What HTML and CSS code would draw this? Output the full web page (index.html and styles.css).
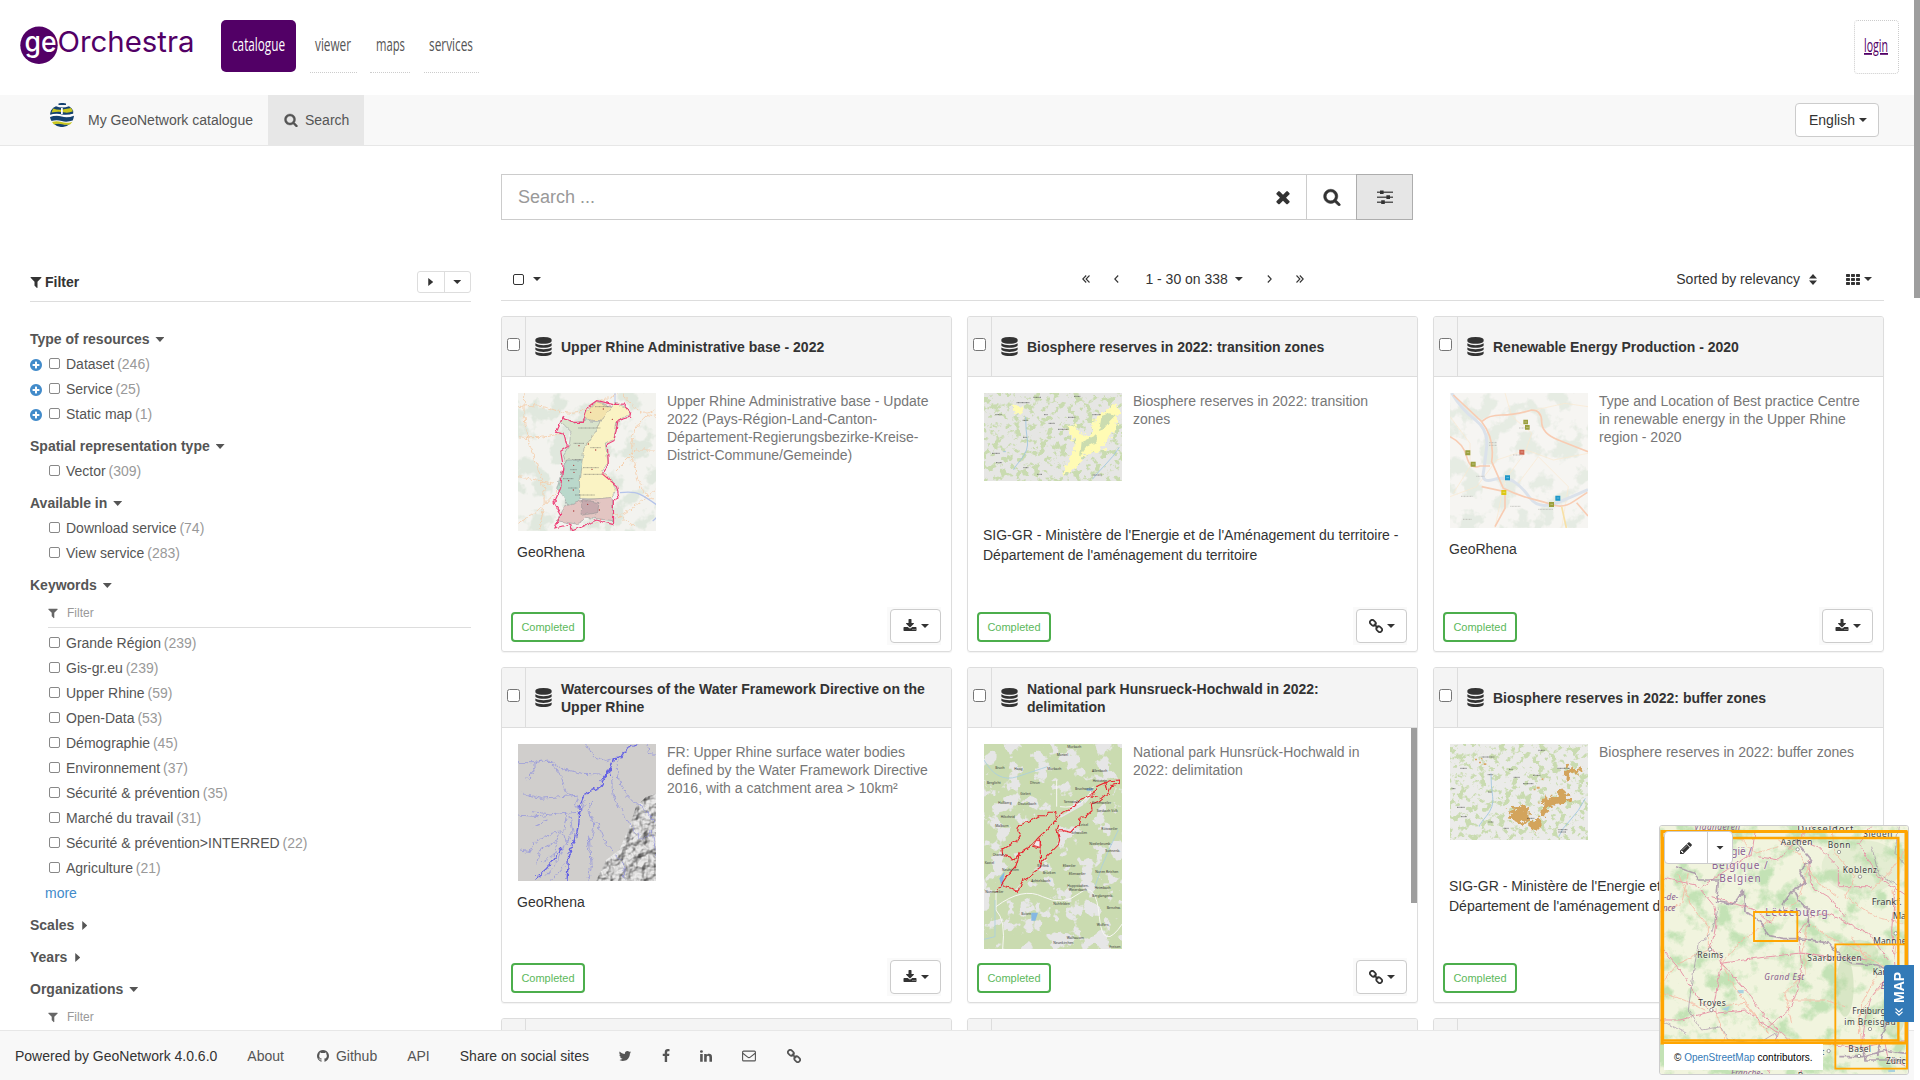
FILE: index.html
```html
<!DOCTYPE html>
<html lang="en">
<head>
<meta charset="utf-8">
<title>My GeoNetwork catalogue</title>
<link rel="stylesheet" href="styles.css">
</head>
<body>
<svg class="defs" aria-hidden="true">
  <symbol id="i-search" viewBox="0 0 1792 1792"><path stroke="currentColor" stroke-width="50" d="M1216 832q0-185-131.5-316.5t-316.5-131.5-316.5 131.5-131.5 316.5 131.5 316.5 316.5 131.5 316.5-131.5 131.5-316.5zm512 832q0 52-38 90t-90 38q-54 0-90-38l-343-342q-179 124-399 124-143 0-273.5-55.5t-225-150-150-225-55.5-273.5 55.5-273.5 150-225 225-150 273.5-55.5 273.5 55.5 225 150 150 225 55.5 273.5q0 220-124 399l343 343q37 37 37 90z"/></symbol>
  <symbol id="i-times" viewBox="0 0 1792 1792"><path d="M1490 1322q0 40-28 68l-136 136q-28 28-68 28t-68-28l-294-294-294 294q-28 28-68 28t-68-28l-136-136q-28-28-28-68t28-68l294-294-294-294q-28-28-28-68t28-68l136-136q28-28 68-28t68 28l294 294 294-294q28-28 68-28t68 28l136 136q28 28 28 68t-28 68l-294 294 294 294q28 28 28 68z"/></symbol>
  <symbol id="i-filter" viewBox="0 0 1792 1792"><path d="M1595 295q17 41-14 70l-493 493v742q0 42-39 59-13 5-25 5-27 0-45-19l-256-256q-19-19-19-45v-486l-493-493q-31-29-14-70 17-39 59-39h1280q42 0 59 39z"/></symbol>
  <symbol id="i-download" viewBox="0 0 1792 1792"><path d="M1344 1344q0-26-19-45t-45-19-45 19-19 45 19 45 45 19 45-19 19-45zm256 0q0-26-19-45t-45-19-45 19-19 45 19 45 45 19 45-19 19-45zm128-224v320q0 40-28 68t-68 28h-1472q-40 0-68-28t-28-68v-320q0-40 28-68t68-28h465l135 136q58 56 136 56t136-56l136-136h464q40 0 68 28t28 68zm-325-569q17 41-14 70l-448 448q-18 19-45 19t-45-19l-448-448q-31-29-14-70 17-39 59-39h256v-448q0-26 19-45t45-19h256q26 0 45 19t19 45v448h256q42 0 59 39z"/></symbol>
  <symbol id="i-plus" viewBox="0 0 1792 1792"><path d="M1344 960v-128q0-26-19-45t-45-19h-256v-256q0-26-19-45t-45-19h-128q-26 0-45 19t-19 45v256h-256q-26 0-45 19t-19 45v128q0 26 19 45t45 19h256v256q0 26 19 45t45 19h128q26 0 45-19t19-45v-256h256q26 0 45-19t19-45zm320-64q0 209-103 385.5t-279.5 279.5-385.5 103-385.5-103-279.5-279.5-103-385.5 103-385.5 279.5-279.5 385.5-103 385.5 103 279.5 279.5 103 385.5z"/></symbol>
  <symbol id="i-github" viewBox="0 0 1792 1792"><path d="M896 128q209 0 385.5 103t279.5 279.5 103 385.5q0 251-146.5 451.5t-378.5 277.5q-27 5-40-7t-13-30q0-3 .5-76.5t.5-134.5q0-97-52-142 57-6 102.5-18t94-39 81-66.5 53-105 20.5-150.5q0-119-79-206 37-91-8-204-28-9-81 11t-92 44l-38 24q-93-26-192-26t-192 26q-16-11-42.5-27t-83.5-38.5-85-13.5q-45 113-8 204-79 87-79 206 0 85 20.5 150t52.5 105 80.5 67 94 39 102.5 18q-39 36-49 103-21 10-45 15t-57 5-65.5-21.5-55.5-62.5q-19-32-48.5-52t-49.5-24l-20-3q-21 0-29 4.5t-5 11.5 9 14 13 12l7 5q22 10 43.5 38t31.5 51l10 23q13 38 44 61.5t67 30 69.5 7 55.5-3.5l23-4q0 38 .5 88.5t.5 54.5q0 18-13 30t-40 7q-232-77-378.5-277.5t-146.5-451.5q0-209 103-385.5t279.5-279.5 385.5-103z"/></symbol>
  <symbol id="i-twitter" viewBox="0 0 1792 1792"><path d="M1684 408q-67 98-162 167 1 14 1 42 0 130-38 259.5t-115.5 248.5-184.5 210.5-258 146-323 54.500q-271 0-496-145 35 4 78 4 225 0 401-138-105-2-188-64.500t-114-159.500q33 5 61 5 43 0 85-11-112-23-185.500-111.500t-73.500-205.500v-4q68 38 146 41-66-44-105-115t-39-154q0-88 44-163 121 149 294.500 238.500t371.500 99.500q-8-38-8-74 0-134 94.500-228.500t228.500-94.500q140 0 236 102 109-21 205-78-37 115-142 178 93-10 186-50z"/></symbol>
  <symbol id="i-facebook" viewBox="0 0 1792 1792"><path d="M1343 12v264h-157q-86 0-116 36t-30 108v189h293l-39 296h-254v759h-306v-759h-255v-296h255v-218q0-186 104-288.5t277-102.5q147 0 228 12z"/></symbol>
  <symbol id="i-linkedin" viewBox="0 0 1792 1792"><path d="M477 625v991h-330v-991h330zm21-306q1 73-50.5 122t-135.5 49h-2q-82 0-132-49t-50-122q0-74 51.5-122.5t134.5-48.5 133 48.5 51 122.5zm1166 729v568h-329v-530q0-105-40.5-164.5t-126.5-59.5q-63 0-105.5 34.5t-63.5 85.5q-11 30-11 81v553h-329q2-399 2-647t-1-296l-1-48h329v144h-2q20-32 41-56t56.5-52 87-43.5 114.5-15.5q171 0 275 113.5t104 332.5z"/></symbol>
  <symbol id="i-database" viewBox="0 0 1792 1792"><path d="M896 768q237 0 443-43t325-127v170q0 69-103 128t-280 93.5-385 34.5-385-34.5-280-93.5-103-128v-170q119 84 325 127t443 43zm0 768q237 0 443-43t325-127v170q0 69-103 128t-280 93.5-385 34.5-385-34.5-280-93.5-103-128v-170q119 84 325 127t443 43zm0-384q237 0 443-43t325-127v170q0 69-103 128t-280 93.5-385 34.5-385-34.5-280-93.5-103-128v-170q119 84 325 127t443 43zm0-1152q208 0 385 34.5t280 93.5 103 128v128q0 69-103 128t-280 93.5-385 34.5-385-34.5-280-93.5-103-128v-128q0-69 103-128t280-93.5 385-34.5z"/></symbol>
  <symbol id="i-pencil" viewBox="0 0 1792 1792"><path d="M491 1536l91-91-235-235-91 91v107h128v128h107zm523-928q0-22-22-22-10 0-17 7l-542 542q-7 7-7 17 0 22 22 22 10 0 17-7l542-542q7-7 7-17zm-54-192l416 416-832 832h-416v-416zm683 96q0 53-37 90l-166 166-416-416 166-165q36-38 90-38 53 0 91 38l235 234q37 39 37 91z"/></symbol>
  <symbol id="i-link" viewBox="0 0 14 14"><g fill="none" stroke="currentColor" stroke-width="1.7" transform="rotate(45 7 7)"><rect x="-.6" y="4.7" width="6.4" height="4.6" rx="2.3"/><rect x="8.2" y="4.7" width="6.4" height="4.6" rx="2.3"/><path d="M4 7h6"/></g></symbol>
  <symbol id="i-mail" viewBox="0 0 14 12"><g fill="none" stroke="currentColor" stroke-width="1.1"><rect x=".6" y="1.1" width="12.8" height="9.8" rx="1"/><path d="M.8 3.2l4.9 3.9q1.3 1 2.6 0l4.9-3.9"/></g></symbol>
  <symbol id="i-sliders" viewBox="0 0 16 14"><path opacity=".8" d="M0 1.6h16v1.4H0zM0 6.5h16v1.4H0zM0 11.5h16v1.4H0z"/><path d="M3 .4h3.6v3.7H3zM9.4 5.3H13V9H9.400zM4.200 10.300h3.600V14H4.200z"/></symbol>
  <symbol id="i-th" viewBox="0 0 14 11"><path d="M0 .7Q0 0 .7 0H3.300Q4 0 4 .7V2.300Q4 3 3.300 3H.7Q0 3 0 2.300zM5 .7Q5 0 5.700 0H8.300Q9 0 9 .7V2.300Q9 3 8.300 3H5.700Q5 3 5 2.300zM10 .7Q10 0 10.700 0h2.600q.7 0 .7.7v1.600q0 .7-.7.7h-2.600q-.7 0-.7-.7z"/><path transform="translate(0 4)" d="M0 .7Q0 0 .7 0H3.300Q4 0 4 .7V2.300Q4 3 3.300 3H.7Q0 3 0 2.300zM5 .7Q5 0 5.700 0H8.300Q9 0 9 .7V2.300Q9 3 8.300 3H5.700Q5 3 5 2.300zM10 .7Q10 0 10.700 0h2.600q.7 0 .7.7v1.600q0 .7-.7.7h-2.600q-.7 0-.7-.7z"/><path transform="translate(0 8)" d="M0 .7Q0 0 .7 0H3.300Q4 0 4 .7V2.300Q4 3 3.300 3H.7Q0 3 0 2.300zM5 .7Q5 0 5.700 0H8.300Q9 0 9 .7V2.300Q9 3 8.300 3H5.700Q5 3 5 2.300zM10 .7Q10 0 10.700 0h2.600q.7 0 .7.7v1.600q0 .7-.7.7h-2.600q-.7 0-.7-.7z"/></symbol>
  <symbol id="i-sort" viewBox="0 0 8 11"><path d="M4 0l4 4.500H0zM0 6.500h8L4 11z"/></symbol>
  <symbol id="i-dleft" viewBox="0 0 8 8"><path fill="none" stroke="currentColor" stroke-width="1.100" d="M4.200.5L.8 4l3.400 3.500M7.500.5L4.100 4l3.400 3.500"/></symbol>
  <symbol id="i-left" viewBox="0 0 5 8"><path fill="none" stroke="currentColor" stroke-width="1.100" d="M4.200.5L.8 4l3.400 3.500"/></symbol>

  <filter id="green" x="0" y="0" width="1" height="1" color-interpolation-filters="sRGB"><feTurbulence type="fractalNoise" baseFrequency=".05" numOctaves="4" seed="7"/><feColorMatrix values="0 0 0 0 .79  0 0 0 0 .86  0 0 0 0 .69  10 0 0 0 -5.3"/></filter>
  <filter id="grey" x="0" y="0" width="1" height="1" color-interpolation-filters="sRGB"><feTurbulence type="fractalNoise" baseFrequency=".022" numOctaves="4" seed="12"/><feColorMatrix values="0 0 0 0 .9  0 0 0 0 .9  0 0 0 0 .9  18 0 0 0 -9.8"/></filter>
  <filter id="woods" x="0" y="0" width="1" height="1" color-interpolation-filters="sRGB"><feTurbulence type="fractalNoise" baseFrequency=".016" numOctaves="5" seed="5"/><feColorMatrix values="0 0 0 0 .72  0 0 0 0 .87  0 0 0 0 .67  5 0 0 0 -2.5"/></filter>
  <filter id="pale" x="0" y="0" width="1" height="1" color-interpolation-filters="sRGB"><feTurbulence type="fractalNoise" baseFrequency=".018" numOctaves="4" seed="9"/><feColorMatrix values="0 0 0 0 .88  0 0 0 0 .91  0 0 0 0 .87  8 0 0 0 -4"/></filter>
  <filter id="relief" x="0" y="0" width="1" height="1" color-interpolation-filters="sRGB"><feTurbulence type="fractalNoise" baseFrequency=".04" numOctaves="3" seed="4"/><feDiffuseLighting surfaceScale="14" diffuseConstant="1.15" lighting-color="#d8d8d8" result="l"><feDistantLight azimuth="225" elevation="60"/></feDiffuseLighting><feComposite in="l" in2="SourceGraphic" operator="in"/></filter>
  <filter id="rough" x="-.1" y="-.1" width="1.2" height="1.2"><feTurbulence type="fractalNoise" baseFrequency=".07" numOctaves="3" seed="2" result="n"/><feDisplacementMap in="SourceGraphic" in2="n" scale="18" xChannelSelector="R" yChannelSelector="G"/></filter>
  <filter id="edge" x="-.1" y="-.1" width="1.2" height="1.2" color-interpolation-filters="sRGB"><feTurbulence type="fractalNoise" baseFrequency=".06" numOctaves="2" seed="2" result="n"/><feDisplacementMap in="SourceGraphic" in2="n" scale="12" xChannelSelector="R" yChannelSelector="G"/></filter>
  <filter id="ragged" x="-.1" y="-.1" width="1.2" height="1.2" color-interpolation-filters="sRGB"><feTurbulence type="fractalNoise" baseFrequency=".06" numOctaves="4" seed="6" result="n"/><feDisplacementMap in="SourceGraphic" in2="n" scale="36" xChannelSelector="R" yChannelSelector="G"/></filter>
</svg>

<div class="page">
  <header class="top">
    <svg class="brand" viewBox="0 0 180 50"><circle cx="19" cy="25.300" r="18.700" fill="#520066"/><text x="4.500" y="32.300" textLength="32" lengthAdjust="spacingAndGlyphs" class="brand-ge">ge</text><text x="37.500" y="32" textLength="137" lengthAdjust="spacingAndGlyphs" class="brand-text">Orchestra</text></svg>
    <nav class="apps">
      <a class="app on"><svg width="53" height="30"><text x="0" y="21" textLength="53" lengthAdjust="spacingAndGlyphs">catalogue</text></svg></a>
      <a class="app a1"><svg width="36" height="30"><text x="0" y="21" textLength="36" lengthAdjust="spacingAndGlyphs">viewer</text></svg></a>
      <a class="app a2"><svg width="30" height="30"><text x="0" y="21" textLength="29" lengthAdjust="spacingAndGlyphs">maps</text></svg></a>
      <a class="app a3"><svg width="45" height="30"><text x="0" y="21" textLength="44" lengthAdjust="spacingAndGlyphs">services</text></svg></a>
    </nav>
    <a class="login"><svg width="25" height="30"><text x="0" y="20" textLength="24" lengthAdjust="spacingAndGlyphs">login</text></svg></a>
  </header>

  <nav class="bar">
    <a class="site">
      <svg class="globe" viewBox="0 0 24 24"><path fill="#14416f" d="M8.500.5Q12-.6 16 .5v1.600H8.500zM1 7.500Q3 4 6 3.200q6 2.600 13 .1 3 1.700 4.200 4.500V11q-7 2.500-12 1Q6 10.500 0 12.500 0 10 1 7.500zM0 14q6-2 11.500-.5 6 1.800 12.500-.8-.3 2.800-1.300 4.800-6 2-11 .5-5.200-1.500-10.200 0Q.3 16.300 0 14zM4 21q4-1.500 8.500-.2 3.500 1 7.300.1-2.800 2.600-6.800 3.100-5.500.4-9-3z"/><path fill="#c9c71e" d="M3.200 5.400Q8 7.500 12.500 6.500T21 5l2 3.300q-5 2.200-9.500 1T1.500 9.500zM2 19q4.800-1.300 9.500.1t10.800-.2l-2 2.300q-4 1.200-8.300 0-4-1-8.100.2z"/><path fill="#fff" d="M11 5h1.800v6H11zM0 11.800q6-2 12-.4 5 1.200 12-1v1.500q-7 2.300-12.500.8Q6 11.300 0 13.400z"/></svg>
      My GeoNetwork catalogue</a>
    <a class="tab"><svg class="ic s13"><use href="#i-search"/></svg>Search</a>
    <a class="btn lang">English <i class="caret"></i></a>
  </nav>

  <main>
    <div class="searchrow">
      <div class="sinput">Search ...</div>
      <div class="sbtn b1"><svg class="ic s18"><use href="#i-times"/></svg></div>
      <div class="sbtn b2"><svg class="ic s17"><use href="#i-search"/></svg></div>
      <div class="sbtn b3"><svg width="16" height="14"><use href="#i-sliders"/></svg></div>
    </div>

    <div class="cols">
      <aside>
        <div class="fhead"><svg class="ic s14"><use href="#i-filter"/></svg><b>Filter</b><span class="grp"><i><u class="caret-r"></u></i><i><u class="caret"></u></i></span></div>
        <section><h4>Type of resources <i class="caret"></i></h4>
          <p><svg class="ic plus"><use href="#i-plus"/></svg><i class="cb"></i>Dataset <em>(246)</em></p>
          <p><svg class="ic plus"><use href="#i-plus"/></svg><i class="cb"></i>Service <em>(25)</em></p>
          <p><svg class="ic plus"><use href="#i-plus"/></svg><i class="cb"></i>Static map <em>(1)</em></p></section>
        <section><h4>Spatial representation type <i class="caret"></i></h4>
          <p class="in"><i class="cb"></i>Vector <em>(309)</em></p></section>
        <section><h4>Available in <i class="caret"></i></h4>
          <p class="in"><i class="cb"></i>Download service <em>(74)</em></p>
          <p class="in"><i class="cb"></i>View service <em>(283)</em></p></section>
        <section><h4>Keywords <i class="caret"></i></h4>
          <div class="ffield"><svg class="ic s12"><use href="#i-filter"/></svg>Filter</div>
          <p class="in"><i class="cb"></i>Grande Région <em>(239)</em></p>
          <p class="in"><i class="cb"></i>Gis-gr.eu <em>(239)</em></p>
          <p class="in"><i class="cb"></i>Upper Rhine <em>(59)</em></p>
          <p class="in"><i class="cb"></i>Open-Data <em>(53)</em></p>
          <p class="in"><i class="cb"></i>Démographie <em>(45)</em></p>
          <p class="in"><i class="cb"></i>Environnement <em>(37)</em></p>
          <p class="in"><i class="cb"></i>Sécurité &amp; prévention <em>(35)</em></p>
          <p class="in"><i class="cb"></i>Marché du travail <em>(31)</em></p>
          <p class="in"><i class="cb"></i>Sécurité &amp; prévention&gt;INTERRED <em>(22)</em></p>
          <p class="in"><i class="cb"></i>Agriculture <em>(21)</em></p>
          <p class="more">more</p></section>
        <section><h4>Scales <i class="caret-r"></i></h4></section>
        <section><h4>Years <i class="caret-r"></i></h4></section>
        <section><h4>Organizations <i class="caret"></i></h4>
          <div class="ffield"><svg class="ic s12"><use href="#i-filter"/></svg>Filter</div></section>
      </aside>

      <div class="results">
        <div class="tools">
          <div class="t-left"><i class="cb dark"></i><i class="caret"></i></div>
          <div class="t-mid"><svg width="8" height="8"><use href="#i-dleft"/></svg><svg class="p1" width="5" height="8"><use href="#i-left"/></svg><span>1 - 30 on 338</span><i class="caret"></i><svg class="p2 flip" width="5" height="8"><use href="#i-left"/></svg><svg class="p3 flip" width="8" height="8"><use href="#i-dleft"/></svg></div>
          <div class="t-right"><span>Sorted by relevancy</span><svg class="sort" width="8" height="11"><use href="#i-sort"/></svg><svg class="th" width="14" height="11"><use href="#i-th"/></svg><i class="caret"></i></div>
        </div>
        <div class="grid">
          <article>
            <div class="ch"><label><i class="box"></i></label><svg class="ic s19"><use href="#i-database"/></svg><h3>Upper Rhine Administrative base - 2022</h3></div>
            <div class="cbody"><div class="media">
              <svg width="138" height="138" viewBox="69 249 414 414"><rect x="69" y="249" width="414" height="414" fill="#f3f3ef"/><rect x="69" y="249" width="414" height="414" filter="url(#pale)"/>
                <g fill="none" stroke="#f5cda8" stroke-width="2.500" filter="url(#rough)"><path d="M69 290q60-10 110 10t90 0 100-50M90 249q-10 80 10 140t40 120-10 150M69 640q60-30 110-90t60-120M480 300q-40 20-60 60t0 120 60 90M370 620q40-20 110-80M483 420h-60l-60 60M69 380q60 10 130-10M380 249q40 60 100 70M69 500l110 20M300 640l60-30 60 40"/></g>
                <path d="M360 249v40q-40 70-70 110-30 60-30 150" fill="none" stroke="#b9c6e8" stroke-width="3"/>
                <path d="M375 548q40-5 60 5t48 30-10 50" fill="none" stroke="#b4c3ea" stroke-width="4"/>
                <g filter="url(#edge)" stroke="#8b8f91" stroke-width="1.500"><path fill="#d9e3cc" d="M205 320l30 20 40-10 25 5 35-5-10 35-30 35-30 60-50 5-10-30 18-30 5-40-20-20-12-10z"/><path fill="#bad8cb" d="M215 450h50l-7 110-15 30-25-5-15-30-18-20 12-40z"/><path fill="#f3e3ad" d="M270 310l35-35 45 15-12 40-38 2-30-5z"/><path fill="#faf3c4" d="M360 280l40 14 5 20-40 20-8 55-26 10 8 60-20 25 32 25 13 35-17 25-92-4-2-60 14-90 35-50 15-35z"/><path fill="#e3c5c2" d="M265 570l87-8 2 70-80-10-30 20-60-10 25-40z"/><path fill="#c6a9ad" d="M262 568l50 10-4 30-50 8z"/></g>
                <path filter="url(#edge)" fill="none" stroke="#ee3f77" stroke-width="3.500" d="M205 320l30 17h30l12-45 28-20 50 12 32-2 20 25-3 15-35 10-12 60-20 10 3 65-18 25 42 35 8 35-17 12 1 70-52-14-42 20-30 12-5-20-47 12 17-40-20-35 20-45 7-70-7-40 20-14-10-38-25-5z"/>
                <g fill="#a33"><circle cx="287" cy="307" r="2"/><circle cx="325" cy="297" r="2"/><circle cx="252" cy="407" r="2"/><circle cx="280" cy="402" r="2"/><circle cx="302" cy="420" r="2"/><circle cx="236" cy="466" r="2"/><circle cx="237" cy="487" r="2"/><circle cx="221" cy="512" r="2"/><circle cx="235" cy="540" r="2"/><circle cx="236" cy="603" r="2"/><circle cx="278" cy="583" r="2"/><circle cx="291" cy="478" r="2"/><circle cx="352" cy="328" r="2"/><circle cx="313" cy="600" r="2"/></g>
                <path stroke="#555" stroke-width="1.500" stroke-dasharray="3 1" d="M250 354h66M300 290h50M236 400h32M286 413h32M232 449h28M226 479h20M204 506h32M220 534h28M264 473h48M266 493h54M240 555h60"/>
              </svg>
              <p>Upper Rhine Administrative base - Update 2022 (Pays-Région-Land-Canton-Département-Regierungsbezirke-Kreise-District-Commune/Gemeinde)</p></div>
              <div class="org">GeoRhena</div></div>
            <div class="cf"><span class="done">Completed</span><span class="act"><a class="btn"><svg class="ic s14"><use href="#i-download"/></svg><i class="caret"></i></a></span></div>
          </article>

          <article>
            <div class="ch"><label><i class="box"></i></label><svg class="ic s19"><use href="#i-database"/></svg><h3>Biosphere reserves in 2022: transition zones</h3></div>
            <div class="cbody"><div class="media">
              <svg width="138" height="88" viewBox="72 249 414 264"><rect x="72" y="249" width="414" height="264" fill="#e6e6e4"/><rect x="72" y="249" width="414" height="264" filter="url(#green)"/>
                <g filter="url(#ragged)" fill="#fffbb4"><path d="M152 280l32 14 6 14-28-3zM325 350l22-5 15 27 30 5 10-58 30-5 20-28 22-8 0 60-12 32-25 26-5 22-45 12-22 18-14 28-36 20-8-8 14-40 26-20-5-35-12-22z"/></g>
                <path d="M425 318l22-8 20 5-18 18-18 25-14 5zM365 395l45-20 0 20-30 15-20 30z" fill="#cbdcb0" filter="url(#edge)"/>
                <path d="M478 412q-20 30-40 50t-40 45M197 320q0 40 5 70t-20 60-20 30M130 425h8" fill="none" stroke="#9cc4e0" stroke-width="2.500"/>
                <path stroke="#444" stroke-width="2" stroke-dasharray="3 1" d="M170 278h38M220 262h24M342 259h20M106 314h20M188 331h16M294 358h32M397 314h26M252 314h12M96 430h24M108 458h18M190 473h16M231 493h16M398 495h28M324 322h22M189 382h11M266 340h18"/>
              </svg>
              <p>Biosphere reserves in 2022: transition zones</p></div>
              <div class="org">SIG-GR - Ministère de l'Energie et de l'Aménagement du territoire - Département de l'aménagement du territoire</div></div>
            <div class="cf"><span class="done">Completed</span><span class="act"><a class="btn"><svg class="ic s14"><use href="#i-link"/></svg><i class="caret"></i></a></span></div>
          </article>

          <article>
            <div class="ch"><label><i class="box"></i></label><svg class="ic s19"><use href="#i-database"/></svg><h3>Renewable Energy Production - 2020</h3></div>
            <div class="cbody"><div class="media">
              <svg width="138" height="135" viewBox="75 249 414 405"><rect x="75" y="249" width="414" height="405" fill="#f6f5f2"/><rect x="75" y="249" width="414" height="405" filter="url(#pale)" opacity=".75"/>
                <g fill="none" stroke="#fbe9cf" stroke-width="2"><path d="M75 560l80-30 60-80 90-30 80 30 104-20M240 249l20 70 60 50-20 60-60 80-30 144M75 320l60 80 0 70-50 80M330 300l90-20 69 10M280 520l60-80 90 90-20 124"/></g>
                <g fill="none" stroke="#dbe2eb" stroke-width="9"><path d="M80 249q30 50 70 80t35 80-10 80 30 20 60 5 50 50 80 15q50-20 94-40"/></g>
                <g fill="none" stroke="#f8ccb3" stroke-width="5"><path d="M75 380q40 20 50 60t40 28h30M85 255l85 80q20-20 60-20t90-15q30 0 30 35t50 55 89 35M170 335q40 50 30 120l35 80q40 20 80 30t70 20 60-10 42-28M170 530l70 15 0 50-30 55M455 578l34 40"/><path d="M410 590l14 64" stroke="#f8e0a4"/></g>
                <g fill="#9a9f3c"><path d="M295 329h14v14h-14zM300 345h14v14h-14zM121 421h15v15h-15zM137 455h15v15h-15zM372 576h15v15h-15z"/></g><path fill="#cf6650" d="M283 419h15v15h-15z"/><path fill="#1d97c9" d="M240 496h15v15h-15zM391 557h15v15h-15z"/><path fill="#ddc714" d="M229 540h15v15h-15z"/>
                <path stroke="#fff" stroke-opacity=".5" stroke-width="2" d="M298 336h8M303 352h8M125 428h8M141 462h8M376 583h8M287 426h8M244 503h8M395 564h8M233 547h8"/>
                <path stroke="#b9b9b4" stroke-width="2.500" stroke-dasharray="3 1.500" d="M282 354h18M154 499h24M108 559h36M114 628h26M256 589h30M340 598h44M192 398h24M192 406h24M264 435h28"/>
              </svg>
              <p>Type and Location of Best practice Centre in renewable energy in the Upper Rhine region - 2020</p></div>
              <div class="org">GeoRhena</div></div>
            <div class="cf"><span class="done">Completed</span><span class="act"><a class="btn"><svg class="ic s14"><use href="#i-download"/></svg><i class="caret"></i></a></span></div>
          </article>

          <article>
            <div class="ch"><label><i class="box"></i></label><svg class="ic s19"><use href="#i-database"/></svg><h3>Watercourses of the Water Framework Directive on the Upper Rhine</h3></div>
            <div class="cbody"><div class="media">
              <svg width="138" height="137" viewBox="69 252 414 411"><rect x="69" y="252" width="414" height="411" fill="#d0cecc"/>
                <path filter="url(#relief)" d="M483 400l-30 10-30 30-20 60-30 70-40 30-30 63h180z" opacity=".7"/>
                <g fill="none" stroke="#9091de" stroke-width="2.200" filter="url(#rough)"><path d="M69 308h50l40-8 40 25 60 15 60 2M160 300q40 40 45 70t25 40M85 400l50 15 60-5 60-5M272 252l20 35 40 15 30-10M69 465l60 5 60-8 60-5M120 300q5 40-30 60M110 455l40 5M75 570l30 5 15-30 50-25 30-5M125 610l10-40 50-30M118 500l40-20M215 460l-10 60 10 30M225 465l10 60M370 290q-10 50 10 90t45 50 55 60M350 350q0 50 10 70t50 80 50 20 23 70M280 460l30 35 25 60 50 55 5 50M290 420q-15 40 0 60t-5 60 10 50M283 530l5 80-10 53M455 252l10 30h18M250 410l-10 30 20 10 10-30M150 650l40-50 20-50 20-30M170 663l40-50M190 520l-10 60-40 30"/></g>
                <g fill="none" stroke="#6664e4" stroke-width="4" filter="url(#rough)"><path d="M429 252l-35 15-20 28-18 0-10 35-30 50-45 20-15 35-5 60-10 40-20 50-5 78M356 295q-10 40-40 70M120 655q40-30 60-60t20-35"/></g>
              </svg>
              <p>FR: Upper Rhine surface water bodies defined by the Water Framework Directive 2016, with a catchment area &gt; 10km²</p></div>
              <div class="org">GeoRhena</div></div>
            <div class="cf"><span class="done">Completed</span><span class="act"><a class="btn"><svg class="ic s14"><use href="#i-download"/></svg><i class="caret"></i></a></span></div>
          </article>

          <article>
            <div class="ch"><label><i class="box"></i></label><svg class="ic s19"><use href="#i-database"/></svg><h3>National park Hunsrueck-Hochwald in 2022: delimitation</h3></div>
            <div class="cbody"><div class="media narrow">
              <svg width="138" height="205" viewBox="72 252 414 615"><rect x="72" y="252" width="414" height="615" fill="#cadbb0"/><rect x="72" y="252" width="414" height="615" filter="url(#grey)"/>
                <path fill="#cadbb0" d="M170 500l60-33 57-10 5 22 80-45 65-75 35 0-10 40-50 50-55 50-60 0 0 45-50 60-60 60-25 30-50 0-5-30 70-85-50 5-5-15 50-40z"/>
                <path d="M108 690v60q30 30 20 117M108 740q80-60 140-30t110-10 60 70 70 20M290 440v-80M300 440q70 10 100-60" fill="none" stroke="#f7f7f3" stroke-width="3"/>
                <path d="M72 300q40 70 100 50t90-30M105 720v110l-33 8M475 510q-30 60-50 110l-20 60" fill="none" stroke="#a9cfe0" stroke-width="2.500"/><path fill="#85b8e2" d="M214 758l20 0-8 24-12 0zM118 655l16-20-8 50zM380 385h18v7h-18z"/>
                <g filter="url(#edge)" fill="none" stroke="#e9202c" stroke-width="3.200"><path d="M110 697l8-15 20-30 30-35 12-40 35-22 20-22 22-20 32-35 15-18 30-15 30-28 30-10 20-30 35-15 27-2 0 12-22 5-8 22-30 25-22 8 2 20-20 18-15 2-5 20-25 25-20-5-15 0"/><path d="M290 482l-3-25-22 0-8 10-22 0-60 32-2 16 8 12-10 14-45 27 3 18 22 5 8 12 12-14 12 0"/><path d="M296 492l-5 18 8 30-5 16-48 48-5 18-28 22-12 16-12-5-10 32-8 8-18-10-18-5-5-10"/><path d="M237 535l3 25 2 45M218 558l18 5M434 365l6 25M395 408l25 5"/></g>
                <path fill="#f1eff0" stroke="#e9202c" stroke-width="2.500" d="M220 556l8-14 12 0 0 20z"/>
                <g class="tiny"><text x="322" y="263">Morbach</text><text x="290" y="287">Monzel</text><text x="106" y="328">Bruch</text><text x="163" y="330">Haag</text><text x="262" y="330">Morbach</text><text x="396" y="336">Allenbach</text><text x="80" y="372">Berglicht</text><text x="210" y="371">Dhron</text><text x="398" y="366">Hettstein</text><text x="345" y="391">Bruchweiler</text><text x="181" y="406">Gielert</text><text x="114" y="433">Hollberg</text><text x="174" y="434">Deuselbach</text><text x="312" y="430">Sensweiler</text><text x="396" y="431">Kirschweiler</text><text x="410" y="457">Siesbach Volk</text><text x="122" y="474">Hilscheid</text><text x="106" y="501">Malborn</text><text x="358" y="497">Leisel</text><text x="424" y="509">Rötsweiler</text><text x="334" y="522">Schwollen</text><text x="388" y="555">Niederbromb.</text><text x="436" y="577">Sonnenb.</text><text x="98" y="588">Otzenh.</text><text x="74" y="611">Kastel</text><text x="232" y="622">Börfink</text><text x="308" y="622">Ellweiler</text><text x="126" y="634">Neuhütten</text><text x="326" y="644">Ellenweiler</text><text x="248" y="641">Brücken</text><text x="406" y="640">Noren Reichen</text><text x="214" y="667">Achtelsbach</text><text x="322" y="681">Hoppstädten-</text><text x="326" y="693">Weiersbach</text><text x="404" y="686">Heimbach</text><text x="76" y="699">Nonnweiler</text><text x="396" y="711">Berglangenb.</text><text x="280" y="734">Nohfelden</text><text x="184" y="765">Bosen</text><text x="440" y="746">Berschw.</text><text x="410" y="797">Wolfers</text><text x="320" y="836">Walhausen</text><text x="280" y="852">Neunkirchen</text><text x="448" y="864">Freisen</text></g>
              </svg>
              <p>National park Hunsrück-Hochwald in 2022: delimitation</p></div><i class="cscroll"></i></div>
            <div class="cf"><span class="done">Completed</span><span class="act"><a class="btn"><svg class="ic s14"><use href="#i-link"/></svg><i class="caret"></i></a></span></div>
          </article>

          <article>
            <div class="ch"><label><i class="box"></i></label><svg class="ic s19"><use href="#i-database"/></svg><h3>Biosphere reserves in 2022: buffer zones</h3></div>
            <div class="cbody"><div class="media">
              <svg width="138" height="96" viewBox="75 252 414 288"><rect x="75" y="252" width="414" height="288" fill="#ebebe9"/><rect x="75" y="252" width="414" height="288" filter="url(#green)"/>
                <g filter="url(#ragged)" fill="#d3a45c"><path d="M245 455l30-8 15-14 22 12-2 30-18 18-28-12zM312 485l33-8 2 25-16 16-16-10zM345 468l8-48 30-10 25-25 12 12 15 8-5 20-40 8-20 15-10 20zM418 358l4-30 20-12 6 10 22-4 2 12-30 5-12 20z"/></g>
                <g fill="#d9a866"><path d="M150 296h6v5h-6zM162 305h6v5h-6zM176 310h8v5h-8zM168 294h4v4h-4zM335 380h9v6h-9zM350 355h5v5h-5zM326 386h5v5h-5z"/></g>
                <path d="M481 415q-20 40-45 65t-35 50M198 340q0 40 5 70t-20 60-20 30" fill="none" stroke="#9cc4e0" stroke-width="2.500"/>
                <path stroke="#444" stroke-width="2" stroke-dasharray="3 1" d="M170 291h38M340 271h20M106 325h20M188 344h16M294 371h32M397 325h38M252 328h12M96 442h24M108 470h18M190 486h16M400 509h28M400 516h24M324 346h22M189 396h11M266 352h18M80 386h12M236 505h16M306 475h22"/>
              </svg>
              <p>Biosphere reserves in 2022: buffer zones</p></div>
              <div class="org">SIG-GR - Ministère de l'Energie et de l'Aménagement du territoire - Département de l'aménagement du territoire</div></div>
            <div class="cf"><span class="done">Completed</span></div>
          </article>

          <article><div class="ch"><label></label></div></article>
          <article><div class="ch"><label></label></div></article>
          <article><div class="ch"><label></label></div></article>
        </div>
      </div>
    </div>
  </main>

  <footer>
    <span class="dk">Powered by GeoNetwork 4.0.6.0</span><a class="f1">About</a><a class="f2"><svg class="ic s14"><use href="#i-github"/></svg>Github</a><a class="f3">API</a><span class="dk f4">Share on social sites</span>
    <svg class="ic s14 f5"><use href="#i-twitter"/></svg><svg class="ic s14 f6"><use href="#i-facebook"/></svg><svg class="ic s14 f7"><use href="#i-linkedin"/></svg><svg class="f8" width="14" height="12"><use href="#i-mail"/></svg><svg class="ic s14 f9"><use href="#i-link"/></svg>
  </footer>
</div>

<div class="pagescroll"></div>

<div class="minimap">
  <svg width="248" height="248" viewBox="705 498 744 744">
    <rect x="705" y="498" width="744" height="744" fill="#f1f4de"/>
    <rect x="705" y="498" width="744" height="744" filter="url(#woods)" opacity=".8"/>
    <ellipse cx="1310" cy="620" rx="120" ry="80" fill="#c8dfb5" opacity=".3"/><ellipse cx="1260" cy="980" rx="26" ry="90" fill="#b3d39f" opacity=".4"/><ellipse cx="1300" cy="880" rx="60" ry="40" fill="#b3d39f" opacity=".35"/><ellipse cx="1405" cy="1060" rx="35" ry="70" fill="#b3d39f" opacity=".4"/>
    <path fill="#a9d2df" d="M938 990h18v10h-18zM890 1048l24-10-6 14zM1390 1228h20v8h-20z"/>
    <g fill="none" stroke="#f7b9a4" stroke-width="2.500" filter="url(#edge)"><path d="M760 640l40 100 50 60 0 70-90 40-50 60M890 910l60-70 90-60 80-60 30-100M890 910l30 60 110 150M870 1040l90-10 70 90M1130 880l20-90 60 40 130 60M1220 500l10 80 60 70-30 60 90 60 80 20M1060 540l60 40 60 90 60 40M1340 690l60-60 40-60M1140 880l0 60-60 60 20 90M1310 1150l-10-80 40-60 60-60M700 760l70-30 20-90M930 520l60 60 70-20M1280 830l40 60 60 30M870 1050l30 80-40 100M1080 1020l120 0 60 20M710 1000l70 20 60 30M1300 1120l10-90 50-90M1400 690l20 100-10 90"/></g>
    <g fill="none" stroke="#e799a9" stroke-width="3" filter="url(#edge)"><path d="M890 910l100-15 130-15h40l60 20M855 865q30 10 35 45l-15 80-10 50q-10 20-40-20t-60-90l-50-60M855 865q30-80 10-130l-50-60-100-20M890 910l90 100q30 60 90 110t60 120M1120 830l10 90-10 60-20 60-80 70M1120 820q30-60 90-60l120 60 60 80M705 1080l60 0 110-30M1000 590l60 10 60-60 40-40M1120 540l60 20 60 60 0 60 100 0M1340 500l-40 50 60 100 90 60M1410 690l-10 120 10 110-70 90-20 70-10 90M1150 600l10 80 50 30 50 60M990 520l-10 60-60 40-90 60M1040 790l-50-40-130-40M1130 880l100 10 100 10M1310 1165q60-20 140-20M1200 1150l100 15M870 1060l90-10 100 70-30 120M1380 1150l10 50 60 20"/></g>
    <g fill="none" stroke="#9f86a1" stroke-width="5" stroke-opacity=".75" filter="url(#edge)"><path d="M750 620l60 20 10 20 60 0-5 65 50 8 30-40 5 60 48 33 20 40 50 10 40 0 50 6 45 8 35 40 30 20 80 5 60 30 40 40-50 60-30 60-20 80M1080 770l-5-40 30-40 35-20-15-40 35-30-50-60M1150 800l0-50-30-30-10-30M1240 1190l80 0 60-20 60 10M1310 1160l10 40 130 0"/></g>
    <g fill="none" stroke="#9f86a1" stroke-width="3" stroke-opacity=".6" filter="url(#edge)"><path d="M880 740l-20 80-40 30-20 120-10 80 40 60 60-10 20 40 90 10 50-30 30 60M1340 560l20 80 60 40M1420 500l-10 80 40 40M705 1080l80 40"/></g>
    <g class="town"><g fill="#fff" stroke="#777" stroke-width="2"><circle cx="855" cy="868" r="5"/><circle cx="859" cy="1050" r="5"/><circle cx="1242" cy="576" r="5"/><circle cx="1305" cy="650" r="5"/><circle cx="1229" cy="868" r="5"/><circle cx="1412" cy="820" r="5"/><circle cx="1335" cy="1107" r="5"/><circle cx="1302" cy="1188" r="5"/><circle cx="1211" cy="1173" r="5"/><circle cx="1118" cy="568" r="5"/></g>
      <text x="1067" y="556" textLength="95">Aachen</text><text x="1208" y="564" textLength="68">Bonn</text><text x="1253" y="640" textLength="103">Koblenz</text><text x="817" y="895" textLength="78">Reims</text><text x="820" y="1037" textLength="82">Troyes</text><text x="1147" y="902" textLength="163">Saarbrücken</text><text x="1315" y="532" textLength="87">Siegen</text><text x="1345" y="852" textLength="130">Mannheim</text><text x="1343" y="945">Karlsruhe</text><text x="1282" y="1061">Freiburg</text><text x="1258" y="1094" textLength="154">im Breisgau</text><text x="1270" y="1176" textLength="68">Basel</text><text x="1383" y="1211">Zürich</text><text x="1189" y="1184">t</text><text x="1118" y="1256">Bern</text>
      <text class="big" x="1117" y="515" textLength="168">Düsseldorf</text><text class="big" x="1340" y="734">Frankf.</text><text class="big" x="1403" y="778">Main</text></g>
    <g class="country"><text x="911" y="585">lgië /</text><text x="860" y="626" textLength="168">Belgique /</text><text x="883" y="667" textLength="124">Belgien</text><text x="1021" y="769" textLength="187">Lëtzebuerg</text></g>
    <g class="region"><text x="808" y="511" textLength="137">Vlaanderen</text><text x="1018" y="961" textLength="119">Grand Est</text><text x="717" y="720">-de-</text><text x="713" y="752">nce</text><text x="918" y="1248">Franche-</text><text x="1367" y="986">B</text></g>
    <g fill="none" stroke="#ffa500"><path stroke-width="9" d="M711 514.500h732V1149H711z"/><path stroke-width="7" d="M714 534h706v607H714z"/><path stroke-width="5.500" d="M987 756h130v87H987zM1231 853h215v373h-215z"/></g>
    <path d="M1446 514v712" stroke="#ffa500" stroke-width="6"/>
  </svg>
  <div class="mtools"><span class="m1"><svg class="ic s14"><use href="#i-pencil"/></svg></span><span class="m2"><i class="caret"></i></span></div>
  <div class="attr">© <a>OpenStreetMap</a> contributors.</div>
</div>
<div class="maptab"><svg class="flip" width="8" height="8"><use href="#i-dleft"/></svg><span>MAP</span></div>
</body>
</html>
```
FILE: styles.css
```css
* { box-sizing: border-box; }
html, body { margin: 0; height: 1080px; overflow: hidden; }
body { position: relative; width: 1920px; background: #fff; font: 14px/20px "Liberation Sans", Arial, sans-serif; color: #333; }
.defs { position: absolute; width: 0; height: 0; }
i, em { font-style: normal; }
p, h3, h4 { margin: 0; font-size: 14px; }
svg { display: block; flex: none; fill: currentColor; overflow: hidden; }
.page { width: 1914px; height: 1080px; display: flex; flex-direction: column; }
.s12 { width: 12px; height: 12px; }
.s13 { width: 14px; height: 14px; }
.s14 { width: 14px; height: 14px; }
.s17 { width: 18px; height: 18px; }
.s18 { width: 20px; height: 20px; }
.s19 { width: 19px; height: 19px; }
.flip { transform: scaleX(-1); }
.caret { display: inline-block; width: 8px; height: 4px; background: currentColor; clip-path: polygon(0 0, 100% 0, 50% 100%); vertical-align: middle; }
.caret-r { display: inline-block; width: 5px; height: 8px; background: currentColor; clip-path: polygon(0 0, 100% 50%, 0 100%); vertical-align: middle; }
.btn { display: flex; align-items: center; border: 1px solid #ccc; border-radius: 4px; background: #fff; color: #333; height: 34px; }

.top { height: 95px; flex: none; display: flex; padding: 20px 15px 0 20px; font-family: "Open Sans", sans-serif; color: #555; }
.brand { width: 180px; height: 50px; }
.brand text { font-family: Inter, sans-serif; font-size: 28.500px; fill: #520066; }
.brand .brand-ge { fill: #fff; font-weight: 500; }
.apps { display: flex; margin-left: 21px; }
.app { height: 52px; display: flex; align-items: center; }
.app svg, .login svg { overflow: visible; }
.app text, .login text { font-size: 18px; }
.app svg { margin-top: -2px; }
.app.on { width: 75px; padding-left: 11px; background: #520066; color: #fff; border-radius: 5px; }
.a1, .a2, .a3 { height: 53px; border-bottom: 1px dotted #ccc; padding-left: 5px; }
.a1 { width: 47px; margin-left: 14px; }
.a2 { width: 40px; margin-left: 13px; padding-left: 6px; }
.a3 { width: 55px; margin-left: 14px; }
.login { margin-left: auto; width: 45px; height: 54px; border: 1px dotted #ccc; border-radius: 4px; display: flex; align-items: center; padding-left: 9px; color: #520066; }
.login text { text-decoration: underline; }

.bar { height: 51px; flex: none; display: flex; background: #f8f8f8; border-bottom: 1px solid #e7e7e7; color: #555; }
.site { width: 268px; padding-left: 50px; display: flex; align-items: center; gap: 14px; white-space: nowrap; }
.globe { width: 24px; height: 24px; margin-top: -10px; }
.tab { width: 96px; padding-left: 16px; gap: 7px; display: flex; align-items: center; background: #e7e7e7; }
.lang { margin: 8px 35px 0 auto; width: 84px; padding-left: 13px; gap: 4px; }

main { flex: 1; min-height: 0; overflow: hidden; }
.searchrow { display: flex; height: 46px; margin: 28px 0 0 501px; width: 912px; }
.sinput { width: 757px; flex: none; border: 1px solid #ccc; border-right: 0; padding-left: 16px; font-size: 18px; line-height: 44px; color: #999; }
.sbtn { flex: none; border: 1px solid #ccc; border-left: 0; display: flex; align-items: center; justify-content: center; }
.b1 { width: 49px; padding-left: 2px; }
.b2 { width: 49px; border-right: 0; }
.b3 { width: 57px; background: #e6e6e6; border: 1px solid #adadad; }
.cols { display: flex; gap: 30px; padding: 40px 30px 0; }
aside { width: 441px; flex: none; color: #555; padding-top: 11px; }
.fhead { height: 31px; display: flex; align-items: flex-start; border-bottom: 1px solid #ddd; color: #333; margin-bottom: 25px; line-height: 22px; }
aside .fhead { height: 31px; }
.fhead .ic { margin: 4px 2px 0 -1px; }
.grp { margin-left: auto; display: flex; width: 54px; height: 22px; border: 1px solid #ddd; border-radius: 3px; }
.grp i { flex: 1; display: flex; align-items: center; justify-content: center; }
.grp i + i { border-left: 1px solid #ddd; }
section { margin-bottom: 7px; }
section h4, section p { height: 25px; line-height: 25px; display: flex; align-items: center; white-space: pre; }
h4 .caret { margin-left: 2px; height: 5px; width: 9px; }
h4 .caret-r { margin-left: 4px; height: 9px; }
section em { color: #999; }
section p em { margin-left: -1px; }
.plus { width: 14px; height: 14px; color: #428bca; margin: 0 6px 0 -1px; }
.cb { display: inline-block; width: 11px; height: 11px; border: 1px solid #888; border-radius: 2px; margin-right: 6px; flex: none; position: relative; top: -1px; }
.in { padding-left: 19px; }
.more { padding-left: 15px; color: #428bca; }
.ffield { height: 33px; padding-bottom: 3px; margin-left: 18px; position: relative; font-size: 12px; color: #999; display: flex; align-items: center; gap: 8px; }
.ffield .ic { color: #666; margin-left: -1px; }
.ffield::after { content: ""; position: absolute; left: 0; right: 0; bottom: 3px; border-bottom: 1px solid #ddd; }
.fhead { padding-bottom: 0; }
aside .fhead { height: 31px; margin-bottom: 25px; }

.results { width: 1383px; flex: none; }
.tools { height: 41px; border-bottom: 1px solid #ddd; display: flex; align-items: center; justify-content: space-between; margin-bottom: 15px; padding-bottom: 2px; }
.t-left, .t-mid, .t-right { display: flex; align-items: center; }
.t-left { padding-left: 12px; }
.cb.dark { border-color: #333; margin-right: 9px; top: 0; }
.t-mid { margin-left: 169px; }
.p1 { margin: 0 26px 0 24px; }
.t-mid .caret { margin: 0 24px 0 7px; }
.p3 { margin-left: 24px; }
.t-right { padding-right: 12px; }
.sort { margin: 0 29px 0 9px; }
.th { margin-right: 4px; }

.grid { display: grid; grid-template-columns: repeat(3, 451px); grid-auto-rows: 336px; gap: 15px; }
article { border: 1px solid #ddd; border-radius: 3px; display: flex; flex-direction: column; box-shadow: 0 1px 1px rgba(0,0,0,.05); overflow: hidden; }
.ch { height: 60px; flex: none; background: #f4f4f4; border-bottom: 1px solid #ddd; display: flex; align-items: center; }
.ch label { width: 24px; height: 59px; border-right: 1px solid #ddd; padding: 21px 0 0 5px; flex: none; }
.box { display: block; width: 13px; height: 13px; border: 1px solid #767676; border-radius: 2.500px; background: #fff; }
.ch .ic { margin: 0 8px 0 8px; }
.ch h3 { font-size: 14px; line-height: 18px; padding-right: 20px; }
.cbody { flex: 1; min-height: 0; padding: 16px 15px 0 16px; position: relative; overflow: hidden; }
.media { display: flex; align-items: flex-start; gap: 11px; min-height: 121px; margin-bottom: 11px; }
.media p { line-height: 18px; color: #777; width: 268px; margin-top: -1px; }
.narrow p { width: 258px; }
.org { margin-left: -1px; width: 430px; }
.cscroll { position: absolute; right: 0; top: 0; width: 6px; height: 175px; background: #9e9e9e; }
.cf { height: 46px; flex: none; display: flex; justify-content: space-between; padding: 0 10px 0 9px; align-items: flex-start; }
.done { margin-top: 7px; height: 30px; width: 74px; border: 2px solid #4cae4c; border-radius: 4px; color: #5cb85c; font-size: 11px; line-height: 27px; text-align: center; }
.act { background: #fafafa; padding: 2px 0 2px 3px; margin-top: 2px; }
.act .btn { width: 51px; padding-left: 12px; gap: 4px; }
.tiny text { font: 10px "Noto Sans", sans-serif; fill: #333; }

footer { height: 50px; flex: none; background: #f8f8f8; border-top: 1px solid #e7e7e7; color: #555; display: flex; align-items: center; padding: 1px 0 0 15px; white-space: nowrap; }
.dk { color: #333; }
.f1 { margin-left: 30px; }
.f2 { margin-left: 32px; display: flex; align-items: center; gap: 6px; }
.f3 { margin-left: 30px; }
.f4 { margin-left: 30px; }
.f5 { margin-left: 29px; }
.f6 { margin-left: 27px; }
.f7 { margin-left: 26px; }
.f8 { margin-left: 29px; }
.f9 { margin-left: 31px; }

.pagescroll { position: absolute; right: 0; top: 0; width: 6px; height: 298px; background: #9e9e9e; }
.minimap { position: absolute; left: 1659px; top: 825px; width: 250px; height: 250px; border: 1px solid #ccc; border-radius: 3px; background: #fff; overflow: hidden; }
.town text { font: 25px "Noto Sans", sans-serif; fill: #3c3c3c; paint-order: stroke; stroke: #fff; stroke-opacity: .5; stroke-width: 3px; }
.town .big { font-size: 28px; }
.country text { font: 30px "Noto Sans", sans-serif; fill: #8b6190; paint-order: stroke; stroke: #fff; stroke-opacity: .5; stroke-width: 3px; }
.region text { font: italic 25px "Noto Sans", sans-serif; fill: #8b6190; }
.mtools { position: absolute; left: 4px; top: 5px; height: 33px; width: 69px; display: flex; background: #fff; border: 1px solid #ccc; border-radius: 4px; }
.m1 { width: 43px; border-right: 1px solid #ccc; display: flex; align-items: center; justify-content: center; }
.m2 { flex: 1; display: flex; align-items: center; justify-content: center; }
.attr { position: absolute; left: 4px; top: 218px; width: 159px; height: 26px; background: #fff; padding: 1px 0 0 10px; font-size: 10px; line-height: 26px; color: #000; white-space: nowrap; }
.attr a { color: #337ab7; }
.maptab { position: absolute; left: 1884px; top: 965px; width: 30px; height: 57px; background: #337ab7; color: #fff; border-radius: 0 3px 3px 0; font-weight: bold; display: flex; writing-mode: vertical-rl; transform: rotate(180deg); align-items: center; justify-content: center; gap: 5px; }
.maptab .flip { transform: rotate(90deg); }
```
